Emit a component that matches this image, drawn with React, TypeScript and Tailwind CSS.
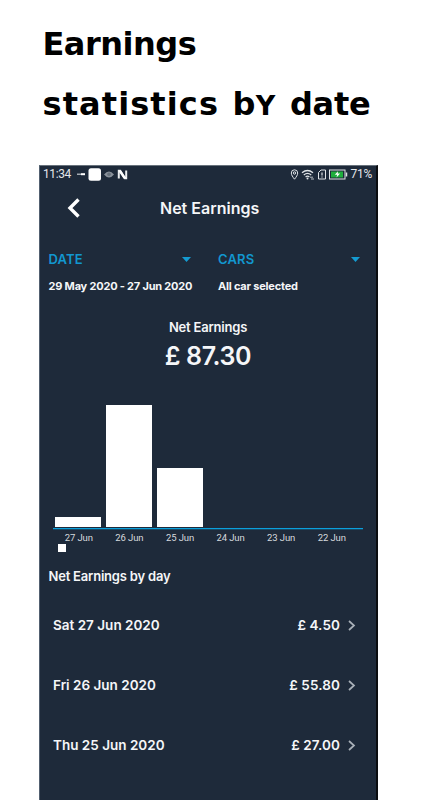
const days = [
  { date: 'Sat 27 Jun 2020', amount: '£ 4.50' },
  { date: 'Fri 26 Jun 2020', amount: '£ 55.80' },
  { date: 'Thu 25 Jun 2020', amount: '£ 27.00' },
  { date: 'Wed 24 Jun 2020', amount: '£ 0.00' },
];

const bars = [
  { label: '27 Jun', height: 10 },
  { label: '26 Jun', height: 122 },
  { label: '25 Jun', height: 59 },
  { label: '24 Jun', height: 0 },
  { label: '23 Jun', height: 0 },
  { label: '22 Jun', height: 0 },
];

function StatusBar() {
  return (
    <div className="flex h-[17px] items-center justify-between pl-[3px] pr-1 font-[Roboto,sans-serif] text-[12px] leading-[17px] text-[#e4e7ea]">
      <div className="flex items-center">
        <span className="w-[33px] tracking-[-0.4px]">11:34</span>
        <svg className="h-[13px] w-[52px]" viewBox="0 0 52 13">
          <path d="M1 6.2h4" stroke="#c7ccd1" strokeWidth="1.2" />
          <path d="M5 6.2h4" stroke="#fff" strokeWidth="2" />
          <rect x="12.5" y="0.3" width="12.5" height="12.4" rx="2.5" fill="#fff" />
          <path d="M28 6.5q5-6 10 0q-5 6-10 0z" fill="#89919a" />
          <circle cx="33" cy="6.3" r="1.8" fill="#66707b" />
          <path d="M42.800 10.500V2.700h1.400l4.600 7.600h1.400V2.500" fill="none" stroke="#eceef0" strokeWidth="2" />
          <path d="M42 2.500h3l5.500 8h-3z" fill="#fff" />
        </svg>
      </div>
      <div className="flex items-center">
        <svg className="mr-[3px] h-[13px] w-[58px]" viewBox="0 0 58 13" fill="none" stroke="#dfe3e6">
          <path d="M4.500 11.200C2.800 9 1.300 7 1.300 5a3.200 3.200 0 0 1 6.400 0c0 2-1.500 4-3.200 6.200z" />
          <circle cx="4.500" cy="5" r="1.200" />
          <path d="M12 4.800q5.500-4.600 11 0M13.800 7q3.700-3.100 7.400 0M15.600 9q1.900-1.600 3.800 0" strokeWidth="1.300" />
          <circle cx="17.500" cy="10.600" r="1" fill="#dfe3e6" stroke="none" />
          <path d="M20 9.200h3M21 11h3" strokeWidth=".8" />
          <path d="M31 2h4.500v9H28.500V4.500z" />
          <path d="M32 4.500v3M32 8.400v1" strokeWidth="1.200" />
          <rect x="39.500" y="2" width="15.500" height="9" />
          <rect x="41" y="3.500" width="12" height="6" fill="#1fae3d" stroke="none" />
          <path d="M56.500 4.500v4" strokeWidth="1.500" />
          <path d="M48 3.200l-3.200 3.500h2.400l-.7 2.800l3.600-3.900h-2.400z" fill="#fff" stroke="none" />
        </svg>
        <span className="tracking-[-0.300px]">71%</span>
      </div>
    </div>
  );
}

function Filter({ label, value }: { label: string; value: string }) {
  return (
    <div className="w-[169.500px] shrink-0">
      <div className="flex h-5 items-center">
        <span className="w-[133px] text-[13px] font-semibold leading-5 tracking-[0.150px] text-[#1297cf]">{label}</span>
        <svg className="h-[5px] w-[9px]" viewBox="0 0 9 5">
          <path d="M0 0h9L4.500 5z" fill="#149bd1" />
        </svg>
      </div>
      <div className="mt-[9px] h-4 whitespace-nowrap text-[11px] font-bold leading-4 tracking-[-0.200px]">{value}</div>
    </div>
  );
}

function Chart() {
  return (
    <div className="h-[152px]">
      <div className="ml-[13px] flex h-[122px] w-[310px] items-end gap-[3.900px] pb-px pl-[1.500px]">
        {bars.map((bar) => (
          <div key={bar.label} className="w-[47px] shrink-0 px-[0.500px]">
            <div className="bg-white" style={{ height: bar.height }} />
          </div>
        ))}
      </div>
      <div className="ml-[13px] h-[2px] w-[310px] border-t border-[#0b9fdb] bg-[#164a66]" />
      <div className="ml-[13.500px] flex h-[14px]">
        {bars.map((bar) => (
          <span key={bar.label} className="w-[50.600px] shrink-0 pt-px text-center font-[Roboto,sans-serif] text-[9.500px] leading-[14px] tracking-[-0.100px] text-[#d5d9dd]">
            {bar.label}
          </span>
        ))}
      </div>
      <div className="ml-[18px] size-[8px] bg-white" />
    </div>
  );
}

export default function App() {
  return (
    <div className="h-[800px] w-[421px] overflow-hidden bg-white">
      <h1 className="h-[165px] whitespace-nowrap pl-[42.500px] pt-[14px] font-['DejaVu_Sans',sans-serif] text-[32px] font-bold leading-[60px] text-black">
        <span className="block tracking-[-0.500px]">Earnings</span>
        <span className="flex">
          <span className="w-[190px] tracking-[1.100px]">statistics</span>{' '}
          <span className="h-[60px] w-[57.500px] tracking-[0.300px]">
            b<span className="text-[39px] leading-none [font-variant-caps:small-caps]">y</span>
          </span>{' '}
          <span className="tracking-[-0.300px]">date</span>
        </span>
      </h1>
      <main className="ml-[39px] h-[635px] w-[339px] overflow-hidden border-l border-r-2 border-t border-l-[#526070] border-r-[#0b0d10] border-t-[#68727c] bg-[#1e2a3a] font-[Inter,sans-serif] text-[#f5f6f8]">
        <StatusBar />
        <header className="flex h-[50px] items-center">
          <svg className="ml-[27px] h-5 w-[13px]" viewBox="0 0 13 20">
            <path d="M11.500 1.500L3 10l8.500 8.500" fill="none" stroke="#fff" strokeWidth="3.400" />
          </svg>
          <h2 className="ml-[80px] whitespace-nowrap text-[16px] font-semibold leading-5">Net Earnings</h2>
        </header>
        <section className="flex h-[85px] pl-[8.500px] pt-[16px]">
          <Filter label="DATE" value="29 May 2020 - 27 Jun 2020" />
          <Filter label="CARS" value="All car selected" />
        </section>
        <section className="h-[88px] text-center">
          <div className="text-[13px] font-semibold leading-[18px] tracking-[-0.200px]">Net Earnings</div>
          <div className="mt-[4px] text-[25px] font-semibold leading-[32px] tracking-[-0.400px]">£ 87.30</div>
        </section>
        <Chart />
        <section>
          <h3 className="ml-[8.500px] pt-[8px] text-[13px] font-semibold leading-[20px] tracking-[-0.200px]">Net Earnings by day</h3>
          <ul className="pt-[9px]">
            {days.map((day) => (
              <li key={day.date} className="flex h-[60px] items-center pl-[13px] pr-[20px] text-[13.500px] font-semibold">
                <span className="tracking-[0px]">{day.date}</span>
                <span className="ml-auto tracking-[0.100px]">{day.amount}</span>
                <svg className="ml-[8px] mt-px h-[11px] w-[8px]" viewBox="0 0 8 11">
                  <path d="M1 1l5 4.500L1 10" fill="none" stroke="#a9b0b8" strokeWidth="1.700" />
                </svg>
              </li>
            ))}
          </ul>
        </section>
      </main>
    </div>
  );
}
